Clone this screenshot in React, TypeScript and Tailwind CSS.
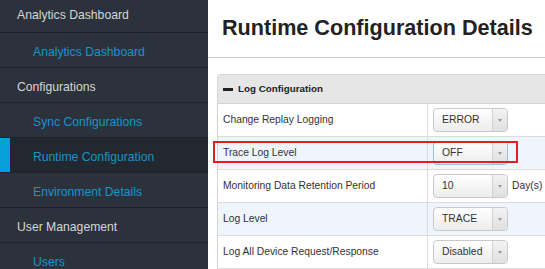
import React from "react";

type NavItem = { label: string; sub?: boolean; active?: boolean };

const nav: NavItem[] = [
  { label: "Analytics Dashboard" },
  { label: "Analytics Dashboard", sub: true },
  { label: "Configurations" },
  { label: "Sync Configurations", sub: true },
  { label: "Runtime Configuration", sub: true, active: true },
  { label: "Environment Details", sub: true },
  { label: "User Management" },
  { label: "Users", sub: true },
];

type Row = { label: string; value: string; suffix?: string; focused?: boolean };

const rows: Row[] = [
  { label: "Change Replay Logging", value: "ERROR" },
  { label: "Trace Log Level", value: "OFF", focused: true },
  { label: "Monitoring Data Retention Period", value: "10", suffix: "Day(s)" },
  { label: "Log Level", value: "TRACE" },
  { label: "Log All Device Request/Response", value: "Disabled" },
  { label: "", value: "" },
];

function Select({ value, focused }: { value: string; focused?: boolean }) {
  return (
    <div
      className={`flex h-[24px] w-[75px] items-stretch overflow-hidden rounded-[4px] border bg-linear-to-b from-white to-[#ededed] ${
        focused ? "border-[#9dbde6]" : "border-[#c9c9c9]"
      }`}
    >
      <div className="flex flex-1 items-center pl-[8px] text-[10.4px] text-[#333]">{value}</div>
      <div className="flex w-[15px] items-center justify-center border-l border-[#d2d2d2] bg-linear-to-b from-[#f2f2f2] to-[#e0e0e0]">
        <div className="h-0 w-0 border-x-[2.5px] border-t-[3px] border-x-transparent border-t-[#9a9a9a]" />
      </div>
    </div>
  );
}

export default function App() {
  return (
    <div className="flex h-[269px] w-[545px] overflow-hidden bg-white font-['Liberation_Sans',Arial,sans-serif]">
      {/* Sidebar */}
      <aside className="w-[208px] shrink-0 bg-[#2b323b]">
        {nav.map((item, i) => (
          <div
            key={i}
            className={`relative flex items-center border-b border-[#1f242b] ${i === 0 ? "h-[33px] pb-[2px]" : "h-[35px] pt-[4px]"} ${
              item.active ? "bg-[#22282f]" : ""
            } ${item.sub ? "pl-[33px] text-[#1a92cc]" : "pl-[17px] text-[#d4d6d8]"} text-[12.2px]`}
          >
            {item.active && <div className="absolute left-0 top-0 h-full w-[10px] bg-[#08a0db]" />}
            {item.label}
          </div>
        ))}
      </aside>

      {/* Main */}
      <main className="min-w-0 flex-1">
        <div className="border-b border-[#cfcfcf] pb-[16px] pl-[14px] pt-[15px]">
          <h1 className="whitespace-nowrap text-[21.6px] font-bold leading-[26px] text-[#222]">
            Runtime Configuration Details
          </h1>
        </div>

        <div className="relative ml-[9px] mt-[16px] w-[400px] rounded-tl-[4px] border-l border-t border-[#d4d4d4]">
          <div className="flex h-[29px] items-center gap-[5px] border-b border-[#d4d4d4] bg-[#e6e6e6] pl-[5px]">
            <div className="h-[3px] w-[10px] bg-[#222]" />
            <span className="text-[9.8px] font-bold text-[#222]">Log Configuration</span>
          </div>

          {rows.map((r, i) => (
            <div
              key={i}
              className={`flex h-[33px] border-b border-[#dcdcdc] ${i % 2 === 1 ? "bg-[#eef5fc]" : "bg-white"}`}
            >
              <div className="flex w-[210px] items-center border-r border-[#dcdcdc] pl-[5px] text-[10.3px] text-[#333]">
                {r.label}
              </div>
              <div className="flex flex-1 items-center gap-[4px] pl-[5px]">
                {r.value && <Select value={r.value} focused={r.focused} />}
                {r.suffix && <span className="text-[10.3px] text-[#333]">{r.suffix}</span>}
              </div>
            </div>
          ))}

          {/* annotation highlight */}
          <div className="absolute left-[-5px] top-[66px] h-[22px] w-[305px] border-2 border-[#e51c23]" />
        </div>
      </main>
    </div>
  );
}
